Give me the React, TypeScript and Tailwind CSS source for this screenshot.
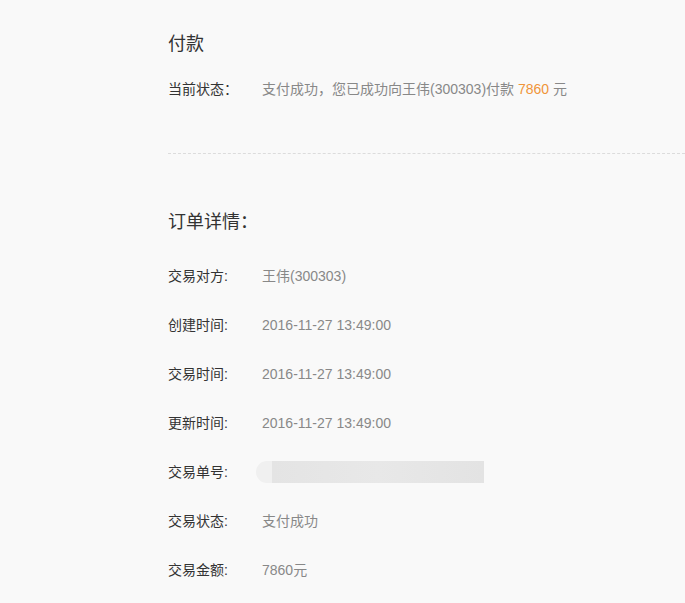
const rows: { label: string; value: string }[] = [
  { label: "交易对方:", value: "王伟(300303)" },
  { label: "创建时间:", value: "2016-11-27 13:49:00" },
  { label: "交易时间:", value: "2016-11-27 13:49:00" },
  { label: "更新时间:", value: "2016-11-27 13:49:00" },
  { label: "交易单号:", value: "" },
  { label: "交易状态:", value: "支付成功" },
  { label: "交易金额:", value: "7860元" },
];

export default function App() {
  return (
    <div className="min-h-[603px] w-[685px] overflow-hidden bg-[#f9f9f9] pl-[168px] pt-[32px] font-['Liberation_Sans','Noto_Sans_CJK_SC',sans-serif]">
      <h2 className="h-6 text-[18px] leading-6 text-[#333]">付款</h2>

      <div className="mt-[23px] flex h-5 items-center text-[14px] leading-5">
        <span className="w-[94px] text-[#333]">当前状态：</span>
        <span className="text-[#888]">
          支付成功，您已成功向王伟(300303)付款 <span className="text-[#f0953a]">7860</span> 元
        </span>
      </div>

      <div className="mt-[54px] border-t border-dashed border-[#dcdcdc]" />

      <h2 className="mt-[56px] h-6 text-[18px] leading-6 text-[#333]">订单详情：</h2>

      <div className="mt-[32px] flex flex-col gap-[29px]">
        {rows.map((r) => (
          <div key={r.label} className="flex h-5 items-center text-[14px] leading-5">
            <span className="w-[94px] text-[#333]">{r.label}</span>
            {r.value ? (
              <span className="text-[#888]">{r.value}</span>
            ) : (
              <div className="-ml-[6px] flex h-[22px] w-[228px] items-center">
                <div className="h-full w-[16px] rounded-l-full bg-[#f0f0f0]" />
                <div className="h-full flex-1 bg-gradient-to-r from-[#e4e4e4] via-[#e8e8e8] to-[#e3e3e3]" />
              </div>
            )}
          </div>
        ))}
      </div>
    </div>
  );
}
